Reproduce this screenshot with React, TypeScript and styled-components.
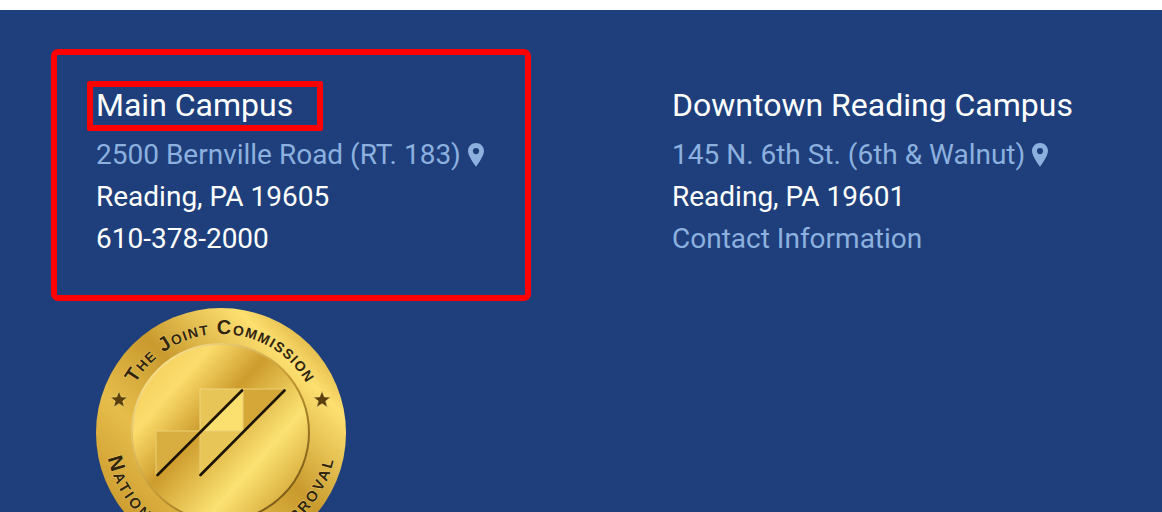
import React from "react";
import styled, { createGlobalStyle } from "styled-components";

const Global = createGlobalStyle`
  html, body {
    margin: 0;
    padding: 0;
    background: #fff;
    overflow: hidden;
  }
`;

const Footer = styled.footer`
  margin-top: 10px;
  height: 502px;
  box-sizing: border-box;
  overflow: hidden;
  background: #1e3f7c;
  padding: 45px 0 0 57px;
  font-family: Roboto, "Liberation Sans", sans-serif;
  color: #fff;
`;

const Columns = styled.div`
  display: flex;
  align-items: flex-start;
  gap: 108px;
`;

const Column = styled.div<{ $marked?: boolean }>`
  width: 468px;
  height: 240px;
  box-sizing: border-box;
  padding: 32px 0 0 39px;
  border-radius: 1px;
  ${(p) => p.$marked && "outline: 6px solid #fe0000; outline-offset: 0;"}
`;

const Heading = styled.h3<{ $marked?: boolean }>`
  margin: 0 0 11px;
  width: fit-content;
  font-size: 32px;
  font-weight: 400;
  line-height: 36px;
  position: relative;

  ${(p) =>
    p.$marked &&
    `&::after {
      content: "";
      position: absolute;
      left: -9px;
      top: -6px;
      width: 224px;
      height: 38px;
      border: 6px solid #fe0000;
      border-radius: 2px;
    }`}
`;

const Line = styled.div`
  font-size: 28px;
  line-height: 42px;
  white-space: nowrap;
`;

const LinkLine = styled(Line)`
  color: #8cb1df;
  display: flex;
  align-items: center;
  gap: 7px;

  svg {
    width: 16px;
    height: 24px;
    margin-top: -1px;
  }
`;

const SealWrap = styled.div`
  margin: 13px 0 0 39px;
  width: 250px;
  height: 250px;

  svg {
    display: block;
  }
`;

const SealText = styled.text`
  font-family: "Liberation Sans", sans-serif;
  font-weight: 700;
  font-variant: small-caps;
  fill: #33250a;
  paint-order: stroke;
  stroke: #f6dd83;
  stroke-width: 0.7px;
`;

const Pin = () => (
  <svg viewBox="0 0 16 24" fill="currentColor">
    <path
      fillRule="evenodd"
      d="M8 0C3.6 0 0 3.5 0 7.9c0 4.6 5.5 12.4 8 15.8 2.5-3.4 8-11.2 8-15.8C16 3.5 12.4 0 8 0zm0 5a3.1 3.1 0 1 1 0 6.2A3.1 3.1 0 0 1 8 5z"
    />
  </svg>
);

const Seal = () => (
  <svg width="250" height="250" viewBox="0 0 250 250">
    <defs>
      <linearGradient id="rim" x1="0.1" y1="0.9" x2="0.9" y2="0.1">
        <stop offset="0" stopColor="#c8962a" />
        <stop offset="0.3" stopColor="#e6bd4b" />
        <stop offset="0.55" stopColor="#c99a2e" />
        <stop offset="0.85" stopColor="#fde070" />
        <stop offset="1" stopColor="#d9ab3c" />
      </linearGradient>
      <linearGradient id="face" x1="0.05" y1="0.1" x2="0.95" y2="0.9">
        <stop offset="0" stopColor="#f2cd5c" />
        <stop offset="0.2" stopColor="#fbdc6c" />
        <stop offset="0.42" stopColor="#cd9c2d" />
        <stop offset="0.72" stopColor="#fbe272" />
        <stop offset="1" stopColor="#cf9f30" />
      </linearGradient>
      <linearGradient id="faceEdge" x1="0.15" y1="0.1" x2="0.85" y2="0.9">
        <stop offset="0" stopColor="#f6e08e" />
        <stop offset="0.5" stopColor="#c69a36" />
        <stop offset="1" stopColor="#7a5a16" />
      </linearGradient>
      <path id="arcTop" d="M 26 125 A 99 99 0 0 1 224 125" />
      <path id="arcBottom" d="M 9 125 A 116 116 0 0 0 241 125" />
    </defs>
    <circle cx="125" cy="125" r="125" fill="url(#rim)" />
    <circle cx="124.5" cy="124.5" r="88.5" fill="url(#face)" stroke="url(#faceEdge)" strokeWidth="2" />
    <SealText fontSize="20" letterSpacing="1.2">
      <textPath href="#arcTop" startOffset="50%" textAnchor="middle">
        The Joint Commission
      </textPath>
    </SealText>
    <SealText fontSize="21" letterSpacing="2.6">
      <textPath href="#arcBottom" startOffset="50%" textAnchor="middle">
        National Quality Approval
      </textPath>
    </SealText>
    <path
      d="M23 83l2.3 5.9 6.3.3-4.9 3.9 1.7 6.1-5.4-3.5-5.4 3.5 1.7-6.1-4.9-3.9 6.3-.3z"
      fill="#5a3f0c"
      stroke="#f3d87c"
      strokeWidth="0.6"
    />
    <path
      d="M226 83l2.3 5.9 6.3.3-4.9 3.9 1.7 6.1-5.4-3.5-5.4 3.5 1.7-6.1-4.9-3.9 6.3-.3z"
      fill="#5a3f0c"
      stroke="#f3d87c"
      strokeWidth="0.6"
    />
    <path d="M104 81h43v42h-43z" fill="#e8c557" stroke="#f0d680" strokeWidth="1" />
    <path d="M147 81v42h-43z" fill="#fbdf6f" />
    <path d="M147 81h42l-42 42z" fill="#d5a738" stroke="#eccf74" strokeWidth="1" />
    <path d="M60 123h44l-44 44z" fill="#d9ae40" stroke="#eccf74" strokeWidth="1" />
    <path d="M104 123h43l-43 44z" fill="#e8c557" stroke="#eccf74" strokeWidth="1" />
    <path
      d="M61.5 167L146 82.5M104.5 167L188.5 82.5"
      stroke="#1c1304"
      strokeWidth="2.6"
      strokeLinecap="round"
    />
  </svg>
);

const App = () => (
  <>
    <Global />
    <Footer>
      <Columns>
        <div>
          <Column $marked>
            <Heading $marked>Main Campus</Heading>
            <LinkLine>
              2500 Bernville Road (RT. 183) <Pin />
            </LinkLine>
            <Line>Reading, PA 19605</Line>
            <Line>610-378-2000</Line>
          </Column>
          <SealWrap>
            <Seal />
          </SealWrap>
        </div>
        <Column>
          <Heading>Downtown Reading Campus</Heading>
          <LinkLine>
            145 N. 6th St. (6th &amp; Walnut) <Pin />
          </LinkLine>
          <Line>Reading, PA 19601</Line>
          <LinkLine>Contact Information</LinkLine>
        </Column>
      </Columns>
    </Footer>
  </>
);

export default App;
